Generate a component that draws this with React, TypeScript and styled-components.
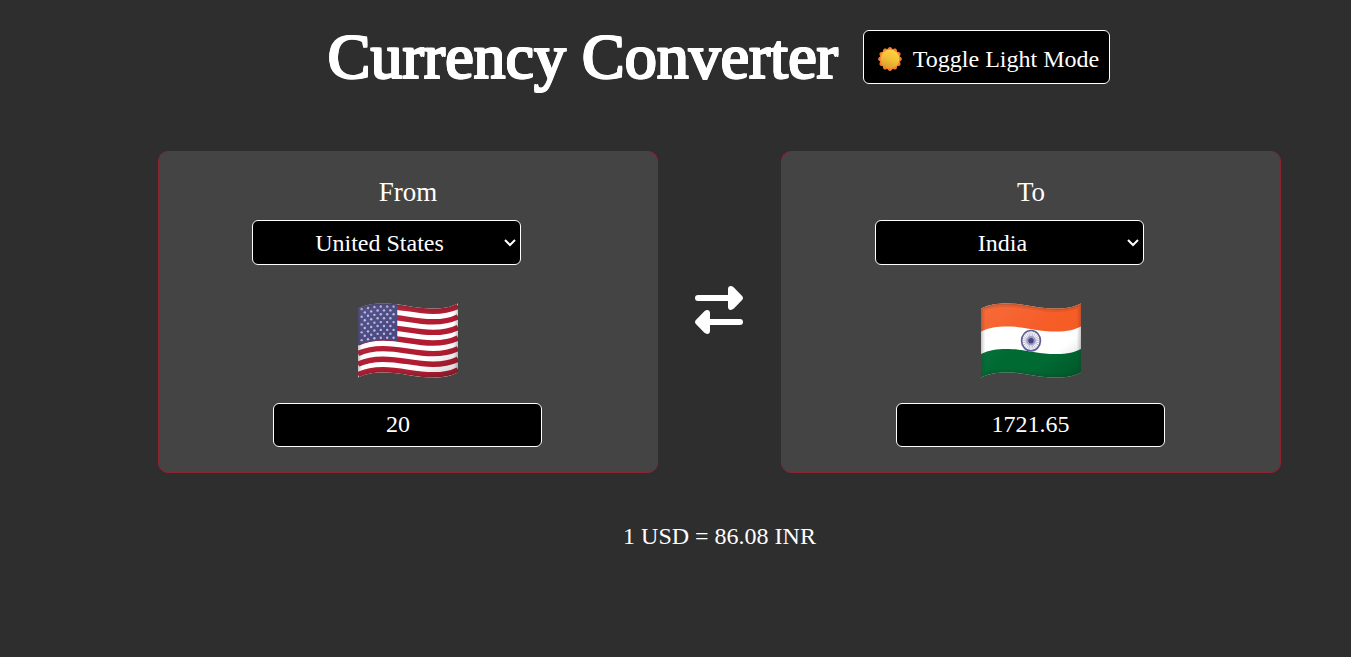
import React, { useId, useState } from "react";
import styled, { createGlobalStyle } from "styled-components";

const GlobalStyle = createGlobalStyle`
  *, *::before, *::after { box-sizing: border-box; }
  body {
    margin: 0;
    background: #2e2e2e;
    color: #fff;
    font-family: "Liberation Serif", "Times New Roman", serif;
    font-size: 24px;
  }
`;

const Page = styled.main`
  display: flex;
  flex-direction: column;
  align-items: center;
  padding: 20px 0 20px 88px;
`;

const Header = styled.header`
  display: flex;
  align-items: center;
  gap: 25px;
  padding-right: 1px;
`;

const Title = styled.h1`
  margin: 0;
  font-size: 64px;
  font-weight: 400;
  line-height: 74px;
  text-shadow: -1px -1px #fff, 1px -1px #fff, -1px 1px #fff, 1px 1px #fff, -1px 0 #fff, 1px 0 #fff;
`;

const ModeButton = styled.button`
  display: flex;
  align-items: center;
  gap: 9px;
  height: 54px;
  padding: 4px 10px 0 12px;
  border: 1px solid #fff;
  border-radius: 6px;
  background: #000;
  color: #fff;
  font: inherit;
  cursor: pointer;
`;

const Converter = styled.section`
  display: flex;
  align-items: center;
  gap: 37px;
  margin-top: 57px;
`;

const Card = styled.div`
  display: flex;
  flex-direction: column;
  align-items: center;
  width: 500px;
  padding: 24px 20px 25px;
  border: 1px solid #8b2331;
  border-radius: 10px;
  background: #444;
`;

const CardLabel = styled.label`
  font-size: 27px;
  line-height: 32px;
`;

const SelectBox = styled.div`
  display: flex;
  position: relative;
  margin: 12px 43px 0 0;
`;

const CountrySelect = styled.select`
  appearance: none;
  width: 269px;
  height: 45px;
  padding: 0 14px 0 0;
  border: 1px solid #fff;
  border-radius: 6px;
  background: #000;
  color: #fff;
  font: inherit;
  text-align: center;
`;

const Chevron = styled.svg`
  position: absolute;
  top: 18px;
  right: 4px;
  pointer-events: none;
`;

const FlagBox = styled.div`
  display: flex;
  margin: 35px 0 23px;
`;

const AmountInput = styled.input`
  width: 269px;
  height: 44px;
  margin-right: 1px;
  padding: 0 2px 2px;
  border: 1px solid #fff;
  border-radius: 6px;
  background: #000;
  color: #fff;
  font: inherit;
  text-align: center;

  &[type="number"] {
    padding-right: 6px;
  }
`;

const SwapButton = styled.button`
  display: flex;
  padding: 0 1px 4px 0;
  border: 0;
  background: none;
  color: #fff;
  cursor: pointer;
`;

const Rate = styled.p`
  margin: 49px 0 0;
  line-height: 28px;
`;

function SunIcon() {
  const petals = Array.from({ length: 12 }, (_, i) => i * 30);
  return (
    <svg width="28" height="28" viewBox="0 0 28 28" aria-hidden="true">
      <defs>
        <linearGradient id="sun" x1="0.7" y1="0" x2="0.3" y2="1">
          <stop offset="0" stopColor="#ffd540" />
          <stop offset="0.5" stopColor="#f3bf36" />
          <stop offset="1" stopColor="#d99c2b" />
        </linearGradient>
      </defs>
      <circle cx="14" cy="14" r="10.4" fill="#f58a30" />
      {petals.map((angle) => (
        <path key={angle} d="M11.2 5.5C11.4 3.6 12.7 2.1 14 2.1S16.6 3.6 16.8 5.5Z" fill="#f47d2e" transform={`rotate(${angle} 14 14)`} />
      ))}
      <circle cx="14" cy="14" r="9.4" fill="url(#sun)" />
    </svg>
  );
}

const waveAt = (y: number) =>
  `M0 ${y + 5}C8 ${y + 1} 16 ${y} 25 ${y}C45 ${y} 55 ${y + 5} 75 ${y + 5}C87 ${y + 5} 94 ${y + 3} 100 ${y}`;

const FLAG_OUTLINE = "M0 8.5C8 4.5 16 3.5 25 3.5C45 3.5 55 8.5 75 8.5C87 8.5 94 6.5 100 3.5V72.5C94 75.5 87 77.5 75 77.5C55 77.5 45 72.5 25 72.5C16 72.5 8 73.5 0 77.5Z";

function FlagFrame({ children, label }: { children: React.ReactNode; label: string }) {
  const id = useId();
  return (
    <svg width="100" height="80" viewBox="0 0 100 80" role="img" aria-label={label}>
      <defs>
        <clipPath id={`${id}c`}>
          <path d={FLAG_OUTLINE} />
        </clipPath>
        <linearGradient id={`${id}s`} x1="0" y1="0" x2="1" y2="1">
          <stop offset="0" stopColor="#fff" stopOpacity="0.1" />
          <stop offset="0.5" stopColor="#fff" stopOpacity="0" />
          <stop offset="0.7" stopColor="#000" stopOpacity="0" />
          <stop offset="1" stopColor="#000" stopOpacity="0.2" />
        </linearGradient>
      </defs>
      <g clipPath={`url(#${id}c)`}>
        {children}
        <rect width="100" height="80" fill={`url(#${id}s)`} />
        <path d={FLAG_OUTLINE} fill="none" stroke="#333" strokeOpacity="0.1" strokeWidth="7" />
        <path d={FLAG_OUTLINE} fill="none" stroke="#333" strokeOpacity="0.16" strokeWidth="3" />
      </g>
    </svg>
  );
}

function UsFlag() {
  const rows = Array.from({ length: 9 }, (_, i) => i);
  return (
    <FlagFrame label="Flag of the United States">
      <rect width="100" height="80" fill="#fff" />
      {[0, 1, 2, 3, 4, 5, 6].map((i) => (
        <path key={i} d={waveAt(6.2 + i * 10.6)} fill="none" stroke="#b21c32" strokeWidth="5.4" />
      ))}
      <path d="M0 2H39.3V41.3C26 39.5 12 39.5 0 45.5Z" fill="#464480" />
      {rows.map((row) =>
        Array.from({ length: row % 2 ? 5 : 6 }, (_, col) => {
          const x = 3.6 + col * 6.4 + (row % 2 ? 3.2 : 0);
          const y = 6.5 + row * 3.9 + Math.max(0, 20 - x) * 0.15;
          return <circle key={`${row}-${col}`} cx={x} cy={y} r="1.2" fill="#b9b8d8" />;
        }),
      )}
    </FlagFrame>
  );
}

function IndiaFlag() {
  const spokes = Array.from({ length: 12 }, (_, i) => i * 15);
  return (
    <FlagFrame label="Flag of India">
      <rect width="100" height="80" fill="#fff" />
      <path d={`${waveAt(26.5)}V0H0Z`} fill="#f65c26" />
      <path d={`${waveAt(49)}V80H0Z`} fill="#006a33" />
      <ellipse cx="50" cy="40.7" rx="9.4" ry="10.2" fill="#fff" stroke="#605e98" strokeWidth="1.7" />
      {spokes.map((angle) => (
        <path key={angle} d="M50 32V49.4" stroke="#605e98" strokeWidth="0.4" transform={`rotate(${angle} 50 40.7)`} />
      ))}
      <circle cx="50" cy="40.7" r="4.6" fill="#605e98" fillOpacity="0.4" />
      <circle cx="50" cy="40.7" r="2.6" fill="#484588" />
    </FlagFrame>
  );
}

function SwapIcon() {
  return (
    <svg width="48" height="48" viewBox="0 0 48 48" fill="currentColor" aria-hidden="true">
      <path d="M3 9H33V3C33 0 36 -0.9 38.6 1.2L47.1 10.1C48.3 11.3 48.3 12.7 47.1 13.9L38.6 22.8C36 24.9 33 24 33 21V15H3A3 3 0 0 1 3 9Z" />
      <path d="M45 33H15V27C15 24 12 23.1 9.4 25.2L0.9 34.1C-0.3 35.3 -0.3 36.7 0.9 37.9L9.4 46.8C12 48.9 15 48 15 45V39H45A3 3 0 0 0 45 33Z" />
    </svg>
  );
}

function CountryPicker({ id, initial }: { id: string; initial: string }) {
  return (
    <SelectBox>
      <CountrySelect id={id} defaultValue={initial}>
        <option value="USD">United States</option>
        <option value="INR">India</option>
      </CountrySelect>
      <Chevron width="14" height="10" viewBox="0 0 14 10" fill="none" stroke="#fff" strokeWidth="2" aria-hidden="true">
        <path d="M2 2L7 7L12 2" />
      </Chevron>
    </SelectBox>
  );
}

export default function App() {
  const [amount, setAmount] = useState("20");
  return (
    <>
      <GlobalStyle />
      <Page>
        <Header>
          <Title>Currency Converter</Title>
          <ModeButton type="button">
            <SunIcon />
            Toggle Light Mode
          </ModeButton>
        </Header>
        <Converter>
          <Card>
            <CardLabel htmlFor="from">From</CardLabel>
            <CountryPicker id="from" initial="USD" />
            <FlagBox><UsFlag /></FlagBox>
            <AmountInput type="number" aria-label="Amount" value={amount} onChange={(e) => setAmount(e.target.value)} />
          </Card>
          <SwapButton type="button" aria-label="Swap currencies"><SwapIcon /></SwapButton>
          <Card>
            <CardLabel htmlFor="to">To</CardLabel>
            <CountryPicker id="to" initial="INR" />
            <FlagBox><IndiaFlag /></FlagBox>
            <AmountInput type="text" aria-label="Converted amount" value="1721.65" readOnly />
          </Card>
        </Converter>
        <Rate>1 USD = 86.08 INR</Rate>
      </Page>
    </>
  );
}
